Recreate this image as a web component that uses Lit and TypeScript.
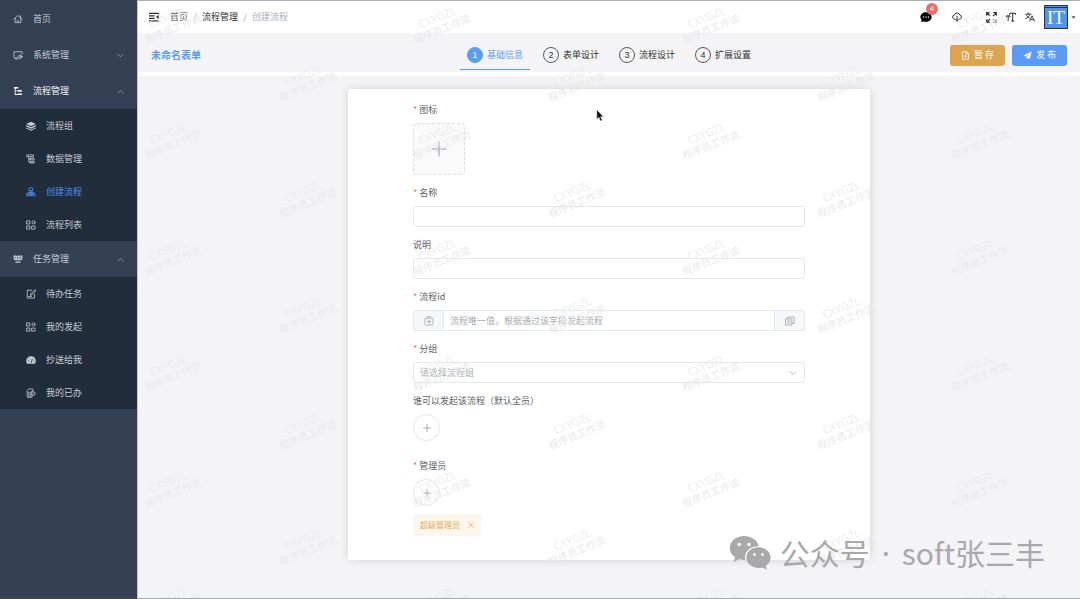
import { LitElement, html, svg, css, nothing } from "lit";
import { customElement, property, state } from "lit/decorators.js";
import { classMap } from "lit/directives/class-map.js";

const stroke = (body: unknown, width = 1.3) => svg`
  <g fill="none" stroke="currentColor" stroke-width=${width} stroke-linecap="round" stroke-linejoin="round">${body}</g>`;

const ICONS: Record<string, unknown> = {
  home: stroke(svg`<path d="M1.5 8 8 2.400 14.500 8M3.300 7v6.800h9.400V7M12 5.500V3M6 11.300h4"/>`),
  system: stroke(svg`<path d="M14.500 6.500V2.800H1.500v9.700h5.500"/><circle cx="11.500" cy="10.800" r="2.900"/><circle cx="11.500" cy="10.800" r=".6"/><path d="M3.500 14.300h4.500"/>`),
  flow: svg`<g fill="currentColor"><path d="M1.500 1.500h7v2.300h-7zM2.800 3.800h1.500v10.400H2.800zM4 7h4v1.500H4zM4 12.700h4v1.500H4zM8 6.300h6v2.700H8zM8 11.800h6.500v2.700H8z"/></g>`,
  layers: svg`<g fill="currentColor"><path d="M8 1 15.500 4.600 8 8.200.5 4.600z"/><path d="m.5 6.500 7.500 3.600 7.500-3.600v2.200L8 12.300.5 8.700z"/><path d="m.5 10.300 7.500 3.600 7.500-3.600v1.500L8 15.400.5 11.800z"/></g>`,
  tree: stroke(svg`<path d="M2 1.500h10v3H2zM7.500 7h5.500v2.500H7.500zM7.500 12H13v2.500H7.500zM4.500 4.500v8.700h3M4.500 8.200h3"/>`),
  create: stroke(svg`<path d="M5.500 1.500h5V6h-5zM8 6v2.500M3.500 10.500v-2h9v2M8 8.500v5M1.500 10.500h3.500v3.500H1.500zM11 10.500h3.500v3.500H11zM6.500 11h3v3h-3z"/>`, 1.400),
  grid: stroke(svg`<path d="M1.500 1.500h4.800v4.800H1.500zM1.500 9.700h4.800v4.800H1.500zM9.700 9.700h4.800v4.800H9.700z"/><circle cx="12.100" cy="3.900" r="2.400"/>`),
  task: svg`<g fill="currentColor"><path d="M1 2.500h4l1 1 1-1h2l1 1 1-1h4V8.500l-2 1.500H3L1 8.500z"/><path d="M4 12h8v2H4z"/></g><path d="M3.500 4.500v3.500M6.500 5h1.500v2.500H6.500M10.500 4.500H12v3h-1.500" stroke="#344155" stroke-width="1" fill="none"/>`,
  edit: stroke(svg`<path d="M9 2H2v12.500h11.500V8M14 1.500 7.500 8 6.800 10.300 9.100 9.500l6-6zM4.500 12h4"/>`),
  gauge: svg`<path fill="currentColor" d="M8 2A7.500 7.500 0 0 0 1.600 13.800h12.800A7.500 7.500 0 0 0 8 2z"/><path d="M8 12.500 10.200 6M3 9.500h1.700M4.500 5.500l1.200 1.200M11.700 9.500h1.500" stroke="#222d3b" stroke-width="1.300" fill="none"/>`,
  done: stroke(svg`<path d="M8 14.500H2V4l2.500-2.500H11V5M4.500 7v4.500M6.800 6.500v5M4 14.500h6"/><path d="M9 6h2.500a3 3 0 0 1 0 6H9zM11 8v2"/>`),
  up: stroke(svg`<path d="M2 11.500 8 5.500l6 6"/>`, 1.600),
  down: stroke(svg`<path d="M2 5 8 11l6-6"/>`, 1.600),
  fold: svg`<g fill="currentColor"><path d="M0 1h16v2H0zM0 5h9v2H0zM0 9h9v2H0zM0 13h16v2H0zM15.500 4.700v6.600L11 8z"/></g>`,
  message: svg`<path fill="#050505" d="M8 1.500c4.200 0 7.500 2.800 7.500 6.500S12.200 14.500 8 14.500c-1 0-2-.2-2.900-.5L1.500 14.800l.7-2.800A6 6 0 0 1 .5 8c0-3.700 3.300-6.500 7.500-6.500z"/><g fill="#fff"><circle cx="4.700" cy="8" r=".9"/><circle cx="8" cy="8" r=".9"/><circle cx="11.300" cy="8" r=".9"/></g>`,
  cloud: stroke(svg`<path d="M5 11.500H4A3.300 3.300 0 0 1 3.500 5 4.700 4.700 0 0 1 12.500 5a3.300 3.300 0 0 1-.5 6.500h-1M8 6.700v7.800M6 12.500l2 2.300 2-2.300"/>`, 1.600),
  full: svg`<g fill="none" stroke="currentColor" stroke-width="1.700"><path d="M1 5.500V1h4.500M1.500 1.500l4.300 4.300M10.500 1H15v4.500M14.500 1.500l-4.300 4.300M1 10.500V15h4.500M1.500 14.500l4.300-4.300"/><path d="M15 10.500V15h-4.500M14.500 14.500l-4.300-4.300" stroke-opacity=".6"/></g>`,
  size: stroke(svg`<path d="M6 4V2h9.300v2M10.700 2v12.500M9 14.500h3.400M.8 8V6.200h5.400V8M3.500 6.200v8.300"/>`, 1.600),
  lang: stroke(svg`<path d="M1 3.500h8.500M5 1.200v2.300M8 3.500C7.300 7 4.500 9.300 1.200 10.300M2.700 5.500C4 8 6 9.300 8 10M7.500 14.500 11.300 6l3.700 8.500M8.800 12h5"/>`, 1.400),
  save: stroke(svg`<path d="M9.500 1.500h-7v13h11v-9zM9.500 1.500v4h4M8 7.300v4.400M5.800 9.500h4.400"/>`, 1.400),
  send: svg`<path fill="currentColor" d="M15.500.8.7 8.200l3.600 1.700L12 4.500 6 10.800v4.200l2.200-2.900 3.900 1.900z"/>`,
  plus: stroke(svg`<path d="M8 1v14M1 8h14"/>`, 1),
  close: stroke(svg`<path d="m1.500 1.500 13 13M14.500 1.500l-13 13"/>`, 1.900),
  id: stroke(svg`<path d="M3.500 3.500h9a2 2 0 0 1 2 2v7a2 2 0 0 1-2 2h-9a2 2 0 0 1-2-2v-7a2 2 0 0 1 2-2zM5 1.200h6M8 6.500v5M5.500 9h5"/>`),
  copy: stroke(svg`<path d="M1.500 4.500h9.500v10H1.500zM4.500 4.500v-3h10V12H11M4 8h4.500M4 11h4.500"/>`),
  caret: svg`<path fill="currentColor" d="M1 4h14l-7 8z"/>`,
};

@customElement("ui-icon")
export class UiIcon extends LitElement {
  static styles = css`
    :host { display: inline-flex; width: 10px; height: 10px; flex: none; }
    .glyph { width: 100%; height: 100%; display: block; overflow: visible; }
  `;
  @property() name = "";
  render() {
    return html`<svg class="glyph" viewBox="0 0 16 16" aria-hidden="true">${ICONS[this.name] ?? nothing}</svg>`;
  }
}

interface MenuItem { label: string; icon: string; children?: MenuItem[]; open?: boolean; }

const MENU: MenuItem[] = [
  { label: "首页", icon: "home" },
  { label: "系统管理", icon: "system", children: [] },
  {
    label: "流程管理", icon: "flow", open: true, children: [
      { label: "流程组", icon: "layers" },
      { label: "数据管理", icon: "tree" },
      { label: "创建流程", icon: "create" },
      { label: "流程列表", icon: "grid" },
    ],
  },
  {
    label: "任务管理", icon: "task", open: true, children: [
      { label: "待办任务", icon: "edit" },
      { label: "我的发起", icon: "grid" },
      { label: "抄送给我", icon: "gauge" },
      { label: "我的已办", icon: "done" },
    ],
  },
];

@customElement("side-menu")
export class SideMenu extends LitElement {
  static styles = css`
    :host { display: block; background: #344155; color: #c3ccd8; padding-top: 1px; }
    .list { list-style: none; margin: 0; padding: 0; }
    .link {
      display: flex; align-items: center; gap: 10px; width: 100%; height: 36px;
      box-sizing: border-box; padding: 0 13px; border: 0; background: none;
      color: inherit; font: inherit; text-decoration: none; cursor: pointer;
    }
    .label { flex: 1; text-align: left; }
    .arrow { width: 7px; height: 7px; color: #a9b2bf; }
    .sub { background: #222d3b; }
    .sub .link { height: 33px; padding-left: 26px; }
    .parent { color: #f4f4f5; }
    .sub .current { color: #4f8ff0; }
  `;
  @property() current = "";
  render() {
    return html`<nav><ul class="list">${MENU.map((m) => html`<li>
      ${m.children
        ? html`<button class=${classMap({ link: true, parent: m.children.some((c) => c.label === this.current) })} aria-expanded=${m.open ? "true" : "false"}>
            <ui-icon name=${m.icon}></ui-icon><span class="label">${m.label}</span>
            <ui-icon class="arrow" name=${m.open ? "up" : "down"}></ui-icon>
          </button>
          ${m.open ? html`<ul class="list sub">${m.children.map((c) => html`<li>
            <a href="#" class=${classMap({ link: true, current: c.label === this.current })}>
              <ui-icon name=${c.icon}></ui-icon><span class="label">${c.label}</span></a></li>`)}</ul>` : nothing}`
        : html`<a class="link" href="#"><ui-icon name=${m.icon}></ui-icon><span class="label">${m.label}</span></a>`}
    </li>`)}</ul></nav>`;
  }
}

@customElement("top-bar")
export class TopBar extends LitElement {
  static styles = css`
    :host {
      display: flex; align-items: center; justify-content: space-between; height: 32px;
      background: #fff; border-top: 1px solid #a9adbd; padding: 0 4px 0 11px; color: #303133;
    }
    .left, .crumbs, .tools, .user { display: flex; align-items: center; }
    .left { gap: 11px; }
    .crumbs { list-style: none; margin: 0; padding: 0; }
    .crumbs a { color: #4b4d52; text-decoration: none; }
    .crumbs .group { color: #303133; }
    .crumbs .last { color: #a8abb2; }
    .slash { width: 14px; text-align: center; color: #a8abb2; }
    .btn { display: flex; position: relative; border: 0; padding: 0; background: none; color: inherit; font: inherit; cursor: pointer; }
    .tools { gap: 9px; }
    .message { margin-right: 11px; }
    .message ui-icon { width: 12px; height: 12px; }
    .cloud { margin-right: 15px; }
    .full ui-icon { width: 11px; height: 11px; }
    .badge {
      position: absolute; left: 6px; top: -8px; width: 12px; height: 12px; border-radius: 50%;
      background: #ee6b6b; color: #fff; font: 8px/12px "Liberation Sans", sans-serif; text-align: center;
    }
    .user { gap: 3px; }
    .avatar {
      width: 24px; height: 24px; box-sizing: border-box; border: 1px solid #30343c; border-top-width: 3px;
      border-top-style: double; background: #4f93f5; color: #fff;
      font: 19px/20px "Liberation Serif", serif; text-align: center;
    }
    .caret { width: 5px; height: 5px; color: #5c5f66; }
  `;
  render() {
    return html`
      <div class="left">
        <button class="btn" aria-label="折叠菜单"><ui-icon name="fold"></ui-icon></button>
        <ol class="crumbs">
          <li><a href="#">首页</a></li><li class="slash">/</li>
          <li><a class="group" href="#">流程管理</a></li><li class="slash">/</li>
          <li class="last">创建流程</li>
        </ol>
      </div>
      <div class="tools">
        <button class="btn message" aria-label="消息"><ui-icon name="message"></ui-icon><span class="badge">4</span></button>
        <button class="btn cloud" aria-label="下载"><ui-icon name="cloud"></ui-icon></button>
        <button class="btn full" aria-label="全屏"><ui-icon name="full"></ui-icon></button>
        <button class="btn" aria-label="字号"><ui-icon name="size"></ui-icon></button>
        <button class="btn" aria-label="语言"><ui-icon name="lang"></ui-icon></button>
        <button class="btn user" aria-label="用户"><span class="avatar">IT</span><ui-icon class="caret" name="caret"></ui-icon></button>
      </div>`;
  }
}

@customElement("step-bar")
export class StepBar extends LitElement {
  static styles = css`
    :host {
      display: grid; grid-template-columns: 1fr auto 1fr; align-items: center; height: 34px;
      background: #f4f4f6; border-bottom: 4px solid #fff; padding: 5px 13px 0;
    }
    .title { margin: 0; font-size: 10px; font-weight: 700; color: #5b9bf8; }
    .steps { display: flex; gap: 6px; list-style: none; margin: 0; padding: 0; }
    .step {
      display: flex; align-items: center; gap: 4px; height: 30px; padding: 0 7px;
      border: 0; border-bottom: 1px solid transparent; background: none; font: inherit; color: #303133; cursor: pointer;
    }
    .num {
      width: 16px; height: 16px; box-sizing: border-box; border: 1px solid #55585e; border-radius: 50%;
      font: 9px/14px "Liberation Sans", sans-serif; text-align: center;
    }
    .active { color: #5b9bf8; border-bottom-color: #5b9bf8; }
    .active .num { background: #5b9bf8; border-color: #5b9bf8; color: #fff; }
    .actions { display: flex; justify-content: flex-end; gap: 7px; }
    .action {
      display: flex; align-items: center; justify-content: center; gap: 4px; width: 55px; height: 21px; padding: 0;
      border: 0; border-radius: 3px; color: #fff; font: inherit; cursor: pointer;
    }
    .action ui-icon { width: 9px; height: 9px; }
    .draft { background: #dca550; }
    .publish { background: #5b9bf8; }
  `;
  @state() private active = 0;
  private steps = ["基础信息", "表单设计", "流程设计", "扩展设置"];
  render() {
    return html`
      <h1 class="title">未命名表单</h1>
      <ol class="steps">${this.steps.map((s, i) => html`<li>
        <button class=${classMap({ step: true, active: i === this.active })} @click=${() => (this.active = i)}>
          <span class="num">${i + 1}</span><span>${s}</span></button></li>`)}</ol>
      <div class="actions">
        <button class="action draft"><ui-icon name="save"></ui-icon><span>暂 存</span></button>
        <button class="action publish"><ui-icon name="send"></ui-icon><span>发 布</span></button>
      </div>`;
  }
}

@customElement("basic-form")
export class BasicForm extends LitElement {
  static styles = css`
    :host { display: block; width: 100%; max-width: 522px; }
    .card {
      display: flex; flex-direction: column; gap: 10px; box-sizing: border-box; padding: 13px 65px 24px;
      background: #fff; border-radius: 2px; box-shadow: 0 0 8px rgba(0, 0, 0, 0.14);
    }
    .field { display: flex; flex-direction: column; align-items: flex-start; gap: 5px; }
    .people { padding-bottom: 7px; }
    .label { line-height: 16px; color: #606266; }
    .required::before { content: "*"; color: #f56c6c; margin-right: 2px; }
    .upload {
      display: flex; align-items: center; justify-content: center; width: 52px; height: 52px; padding: 0;
      border: 1px dashed #dcdfe6; border-radius: 4px; background: #fafafa; color: #8c939d; cursor: pointer;
    }
    .upload ui-icon { width: 16px; height: 16px; }
    .box {
      width: 100%; height: 21px; box-sizing: border-box; padding: 0 6px; border: 1px solid #e5e7eb; border-radius: 3px;
      background: #fff; font: inherit; color: #606266; outline: none; appearance: none;
    }
    .box::placeholder { color: #a8abb2; opacity: 1; }
    .group { display: flex; width: 100%; height: 21px; }
    .group .box { flex: 1; min-width: 0; border-radius: 0; }
    .addon {
      display: flex; align-items: center; justify-content: center; width: 30px; box-sizing: border-box; padding: 0;
      border: 1px solid #e5e7eb; background: #f5f7fa; color: #a0a3a9;
    }
    .before { border-right: 0; border-radius: 3px 0 0 3px; }
    .after { border-left: 0; border-radius: 0 3px 3px 0; }
    .select { position: relative; width: 100%; height: 21px; }
    .select .box { color: #a8abb2; }
    .select ui-icon { position: absolute; right: 8px; top: 7px; width: 8px; height: 8px; color: #a8abb2; pointer-events: none; }
    .add {
      display: flex; align-items: center; justify-content: center; width: 27px; height: 27px; padding: 0;
      border: 1px solid #e4e6eb; border-radius: 50%; background: #fff; color: #606266; cursor: pointer;
    }
    .add ui-icon { width: 8px; height: 8px; }
    .tag {
      display: flex; align-items: center; gap: 8px; height: 22px; margin-top: 3px; padding: 0 7px; border-radius: 3px;
      background: #fdf6ec; color: #e6a95a; font-size: 8px;
    }
    .remove { display: flex; border: 0; padding: 0; background: none; color: inherit; cursor: pointer; }
    .remove ui-icon { width: 6px; height: 6px; }
  `;
  render() {
    return html`<form class="card" @submit=${(e: Event) => e.preventDefault()}>
      <div class="field"><span class="label required" id="pic">图标</span>
        <button type="button" class="upload" aria-labelledby="pic"><ui-icon name="plus"></ui-icon></button></div>
      <div class="field"><label class="label required" for="name">名称</label><input class="box" id="name" type="text" /></div>
      <div class="field"><label class="label" for="desc">说明</label><input class="box" id="desc" type="text" /></div>
      <div class="field"><label class="label required" for="flow">流程id</label>
        <div class="group">
          <span class="addon before"><ui-icon name="id"></ui-icon></span>
          <input class="box" id="flow" type="text" placeholder="流程唯一值，根据通过该字段发起流程" />
          <button type="button" class="addon after" aria-label="复制"><ui-icon name="copy"></ui-icon></button>
        </div></div>
      <div class="field"><label class="label required" for="group">分组</label>
        <div class="select"><select class="box" id="group"><option value="">请选择流程组</option></select><ui-icon name="down"></ui-icon></div></div>
      <div class="field people"><span class="label" id="starter">谁可以发起该流程（默认全员）</span>
        <button type="button" class="add" aria-labelledby="starter"><ui-icon name="plus"></ui-icon></button></div>
      <div class="field"><span class="label required" id="admin">管理员</span>
        <button type="button" class="add" aria-labelledby="admin"><ui-icon name="plus"></ui-icon></button>
        <span class="tag">超级管理员<button type="button" class="remove" aria-label="移除"><ui-icon name="close"></ui-icon></button></span></div>
    </form>`;
  }
}

@customElement("water-mark")
export class WaterMark extends LitElement {
  static styles = css`
    :host { display: block; pointer-events: none; }
    .sheet { display: block; width: 100%; height: 100%; }
    .ink { fill: #e6e6e6; fill-opacity: 0.8; font-size: 10px; font-weight: 500; text-anchor: middle; }
    .latin { font-family: "Open Sans", sans-serif; font-size: 11px; }
  `;
  render() {
    const mark = (x: number, y: number) => svg`<g transform="translate(${x} ${y}) rotate(-22)">
      <text class="ink latin" x="0" y="-3">CXYGZL</text><text class="ink" x="0" y="9">程序员工作流</text></g>`;
    return html`<svg class="sheet" aria-hidden="true">
      <defs><pattern id="mark" width="269" height="116" patternUnits="userSpaceOnUse">
        ${mark(33, 24)}${mark(168, 82)}
      </pattern></defs>
      <rect width="100%" height="100%" fill="url(#mark)"></rect></svg>`;
  }
}

@customElement("app-root")
export class AppRoot extends LitElement {
  static styles = css`
    :host {
      display: grid; grid-template-columns: 137px 1fr; min-height: 100vh; position: relative; overflow: hidden;
      font: 9px/14px "Noto Sans CJK SC", "Noto Sans", sans-serif;
    }
    .page { position: relative; display: flex; flex-direction: column; min-width: 0; border-left: 1px solid #c3c8d0; background: #f4f4f6; }
    .body { flex: 1; display: flex; justify-content: center; align-items: flex-start; padding: 13px 20px; }
    .marks { position: absolute; inset: 0; }
    .taskbar { position: absolute; left: 0; right: 0; bottom: 0; height: 1px; background: linear-gradient(90deg, #3f4a45 137px, #a3a9ae 137px); }
    .account {
      position: absolute; right: 35px; bottom: 23px; display: flex; align-items: center; gap: 9px;
      color: #a9a9aa; font-size: 30px; line-height: 44px;
    }
    .name { display: flex; align-items: baseline; gap: 12px; }
    .dot { font-family: "Noto Sans", sans-serif; }
    .wechat { width: 42px; height: 36px; }
    .pointer { position: absolute; left: 596px; top: 109px; width: 8px; height: 13px; }
  `;
  render() {
    return html`
      <side-menu current="创建流程"></side-menu>
      <div class="page">
        <top-bar></top-bar>
        <step-bar></step-bar>
        <main class="body"><basic-form></basic-form></main>
        <water-mark class="marks"></water-mark>
      </div>
      <div class="account">
        <svg class="wechat" viewBox="0 0 42 36" aria-hidden="true">
          <path fill="#a9a9aa" d="M15 1C7 1 .8 6.300.8 13c0 3.800 2 7 5.200 9.200L4.700 27l5.300-2.800c1.600.5 3.300.8 5 .8h1.300A11 11 0 0 1 16 22.500c0-6.500 6-11.300 13-11.300h.8C28.500 5.200 22.300 1 15 1z"/>
          <path fill="#a9a9aa" d="M29.500 12.300c-6.800 0-12.200 4.600-12.200 10.300S22.700 33 29.500 33c1.400 0 2.800-.2 4-.6l4.300 2.400-1.100-3.800c3-1.900 4.900-4.900 4.900-8.400 0-5.700-5.300-10.300-12.100-10.300z"/>
          <g fill="#f7f7f8"><circle cx="10.300" cy="9.500" r="1.800"/><circle cx="20" cy="9.500" r="1.800"/><circle cx="25.500" cy="19.500" r="1.500"/><circle cx="33.500" cy="19.500" r="1.500"/></g>
        </svg>
        <span class="name"><span>公众号</span><span class="dot">·</span><span>soft张三丰</span></span>
      </div>
      <svg class="pointer" viewBox="0 0 8 13" aria-hidden="true"><path d="M.8.8v9.400l2.100-1.900 1.600 3.700 1.700-.8-1.600-3.500h2.800z" fill="#111" stroke="#ddd" stroke-width=".5"/></svg>
      <div class="taskbar"></div>`;
  }
}
